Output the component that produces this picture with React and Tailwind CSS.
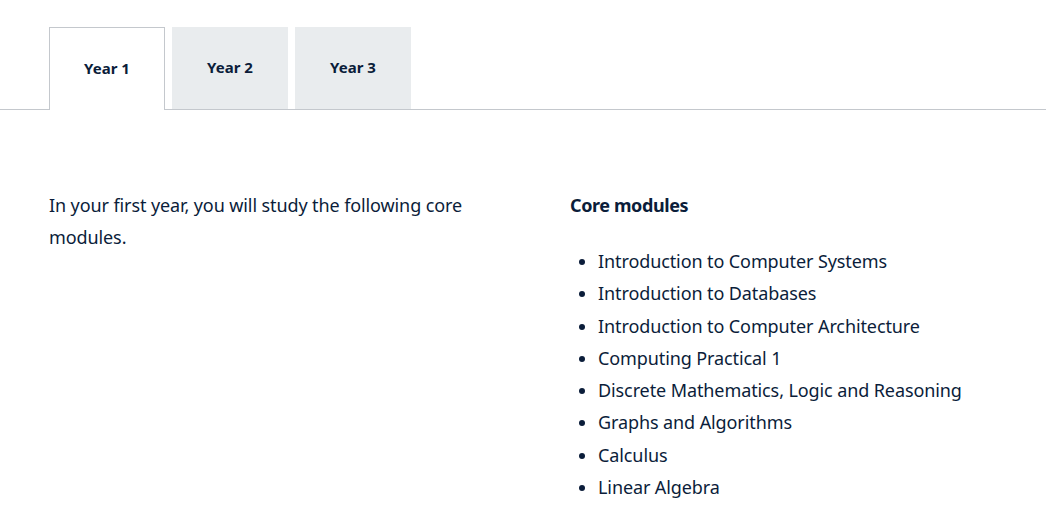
const modules = [
    'Introduction to Computer Systems',
    'Introduction to Databases',
    'Introduction to Computer Architecture',
    'Computing Practical 1',
    'Discrete Mathematics, Logic and Reasoning',
    'Graphs and Algorithms',
    'Calculus',
    'Linear Algebra',
]

const tabs = ['Year 1', 'Year 2', 'Year 3']

const App = () => {
    return (
        <div className="bg-white min-h-[522px] text-[#0b1d3a]" style={{ fontFamily: '"Noto Sans", "Open Sans", sans-serif' }}>
            <div className="pt-[27px] border-b border-[#c4c8cd] flex gap-[7px] pl-[49px]">
                {tabs.map((t, i) => (
                    <div
                        key={t}
                        className={`w-[116px] h-[83px] -mb-px pb-[2px] flex items-center justify-center text-[15px] font-bold ${i === 0 ? 'bg-white border border-b-0 border-[#c4c8cd]' : 'bg-[#e9ecee] border-b border-[#c4c8cd]'}`}
                    >
                        {t}
                    </div>
                ))}
            </div>

            <div className="flex pl-[49px] pt-[79px]">
                <p className="w-[430px] text-[18px] leading-[32px] tracking-[-0.1px]">
                    In your first year, you will study the following core modules.
                </p>
                <div className="ml-[91px]">
                    <h3 className="text-[18px] font-bold leading-[32px] tracking-[-0.4px]">Core modules</h3>
                    <ul className="mt-[24px] list-disc pl-[28px] text-[18px] leading-[32.25px] tracking-[-0.1px] marker:text-[#0b1d3a]">
                        {modules.map((m) => (
                            <li key={m}>{m}</li>
                        ))}
                    </ul>
                </div>
            </div>
        </div>
    )
}

export default App
